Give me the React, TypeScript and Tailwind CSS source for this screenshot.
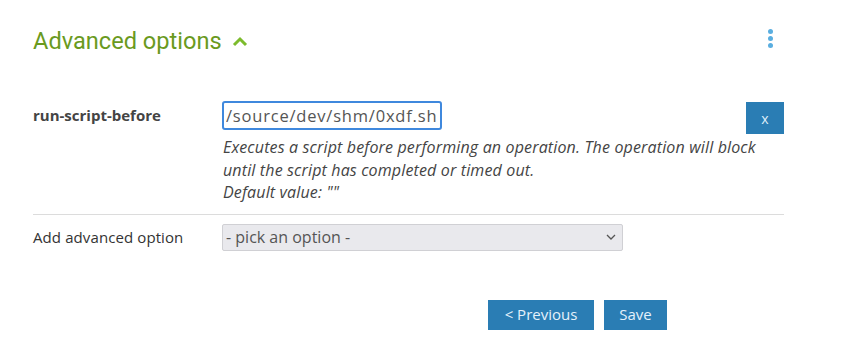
import React from "react";

export default function App() {
  return (
    <div className="w-[841px] h-[350px] bg-white" style={{ fontFamily: '"Open Sans", "Noto Sans", sans-serif' }}>
      <div className="pl-[33px] pr-[57px] pt-[26px]">
        <div className="flex items-center justify-between h-[30px]">
          <div className="flex items-center gap-[10px]">
            <span className="text-[23.6px] leading-[30px] text-[#6a9a1e]" style={{ fontFamily: 'Roboto, sans-serif' }}>Advanced options</span>
            <svg width="16" height="12" viewBox="0 0 16 12" className="mt-[2px]">
              <path d="M2 9 L8 3 L14 9" stroke="#7cbb2c" strokeWidth="3" fill="none" />
            </svg>
          </div>
          <div className="flex flex-col gap-[2px] mr-[11px] mb-[6px]">
            <span className="w-[5px] h-[5px] rounded-full bg-[#5aaee0]" />
            <span className="w-[5px] h-[5px] rounded-full bg-[#5aaee0]" />
            <span className="w-[5px] h-[5px] rounded-full bg-[#5aaee0]" />
          </div>
        </div>

        <div className="flex mt-[45px]">
          <div className="w-[189px] pt-[3px] text-[15px] font-bold text-[#444]">run-script-before</div>
          <div className="flex-1">
            <div className="flex justify-between">
              <input
                readOnly
                value="/source/dev/shm/0xdf.sh"
                className="w-[220px] h-[29px] border-2 border-[#3f88dd] rounded-[3px] px-[2px] pb-[1px] text-[16.5px] tracking-[0.8px] text-[#555] outline-none"
              />
              <button className="w-[38px] h-[32px] mt-[1px] bg-[#2a7db4] text-[#dfeefa] text-[14px]">x</button>
            </div>
            <div className="text-[16px] italic leading-[22.5px] text-[#444] mt-[2px] pl-[1px] tracking-[0.15px]">
              <div>Executes a script before performing an operation. The operation will block</div>
              <div>until the script has completed or timed out.</div>
              <div>Default value: ""</div>
            </div>
          </div>
        </div>

        <div className="h-px bg-[#dcdcdc] mt-[10px]" />

        <div className="flex items-center mt-[9px]">
          <div className="w-[189px] text-[15px] text-[#333] tracking-[0.1px]">Add advanced option</div>
          <div className="w-[401px] h-[27px] bg-[#e9e9ed] border border-[#d0d0d4] rounded-[2px] flex items-center justify-between px-[3px]">
            <span className="text-[16px] text-[#555]">- pick an option -</span>
            <svg width="10" height="6" viewBox="0 0 10 6" className="mr-[3px]">
              <path d="M1 1 L5 5 L9 1" stroke="#555" strokeWidth="1.3" fill="none" />
            </svg>
          </div>
        </div>

        <div className="flex gap-[10px] mt-[49px] pl-[455px]">
          <button className="w-[106px] h-[30px] bg-[#2a7db4] text-[#e4f1fb] text-[15px]">&lt; Previous</button>
          <button className="w-[63px] h-[30px] bg-[#2a7db4] text-[#e4f1fb] text-[15px]">Save</button>
        </div>
      </div>
    </div>
  );
}
